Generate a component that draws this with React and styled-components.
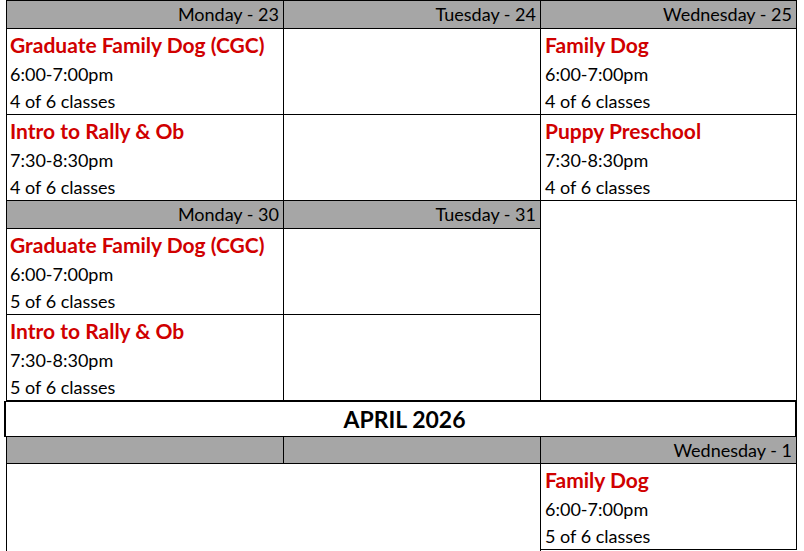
import React from "react";
import styled, { createGlobalStyle } from "styled-components";

const GlobalStyle = createGlobalStyle`
  body {
    margin: 0;
    background: #fff;
    font-family: Lato, "Liberation Sans", sans-serif;
    color: #000;
  }
`;

const Sheet = styled.div`
  margin-left: 6px;
  width: 791px;
`;

const Section = styled.div`
  display: grid;
  grid-template-columns: 277px 257px 256px;
  grid-template-rows: ${({ $rows }) => $rows};
  border-left: 1px solid #000;
  border-top: ${({ $top }) => ($top ? "1px solid #000" : "none")};
`;

const Cell = styled.div`
  box-sizing: border-box;
  border-right: 1px solid #000;
  border-bottom: ${({ $open }) => ($open ? "none" : "1px solid #000")};
  grid-column: ${({ $cols }) => $cols || "auto"};
  grid-row: ${({ $rowSpan }) => ($rowSpan ? `span ${$rowSpan}` : "auto")};
`;

const DayHeader = styled(Cell)`
  background: #a6a6a6;
  text-align: right;
  padding-right: 4px;
  font-size: 18px;
  line-height: 27px;
`;

const EventCell = styled(Cell)`
  padding: 4px 0 0 ${({ $pad }) => $pad || 4}px;
  font-size: 18px;
  line-height: 27.5px;
`;

const Title = styled.div`
  color: #d00000;
  font-weight: 700;
  font-size: 21px;
  line-height: 23.5px;
  margin-bottom: 4px;
  white-space: nowrap;
`;

const Line = styled.div``;

const MonthBanner = styled.div`
  box-sizing: border-box;
  margin-left: -2px;
  width: 793px;
  height: 36px;
  border-top: 1px solid #000;
  border-left: 2px solid #000;
  border-right: 2px solid #000;
  border-bottom: 1px solid #000;
  text-align: center;
  font-weight: 700;
  font-size: 23px;
  line-height: 34px;
  padding-left: 8px;
`;

const Event = ({ title, time, count, pad }) => (
  <EventCell $pad={pad}>
    <Title>{title}</Title>
    <Line>{time}</Line>
    <Line>{count}</Line>
  </EventCell>
);

const App = () => {
  return (
    <>
      <GlobalStyle />
      <Sheet>
        <Section $top $rows="28px 86px 86px">
          <DayHeader>Monday - 23</DayHeader>
          <DayHeader>Tuesday - 24</DayHeader>
          <DayHeader>Wednesday - 25</DayHeader>
          <Event pad={3} title="Graduate Family Dog (CGC)" time="6:00-7:00pm" count="4 of 6 classes" />
          <Cell />
          <Event title="Family Dog" time="6:00-7:00pm" count="4 of 6 classes" />
          <Event pad={3} title="Intro to Rally & Ob" time="7:30-8:30pm" count="4 of 6 classes" />
          <Cell />
          <Event title="Puppy Preschool" time="7:30-8:30pm" count="4 of 6 classes" />
        </Section>
        <Section $rows="28px 86px 86px">
          <DayHeader>Monday - 30</DayHeader>
          <DayHeader>Tuesday - 31</DayHeader>
          <Cell $cols="3" $rowSpan={3} />
          <Event pad={3} title="Graduate Family Dog (CGC)" time="6:00-7:00pm" count="5 of 6 classes" />
          <Cell />
          <Event pad={3} title="Intro to Rally & Ob" time="7:30-8:30pm" count="5 of 6 classes" />
          <Cell />
        </Section>
        <MonthBanner>APRIL 2026</MonthBanner>
        <Section $rows="27px 86px 40px">
          <DayHeader />
          <DayHeader />
          <DayHeader>Wednesday - 1</DayHeader>
          <Cell $cols="1 / 3" $rowSpan={2} $open />
          <Event title="Family Dog" time="6:00-7:00pm" count="5 of 6 classes" />
        </Section>
      </Sheet>
    </>
  );
};

export default App;
